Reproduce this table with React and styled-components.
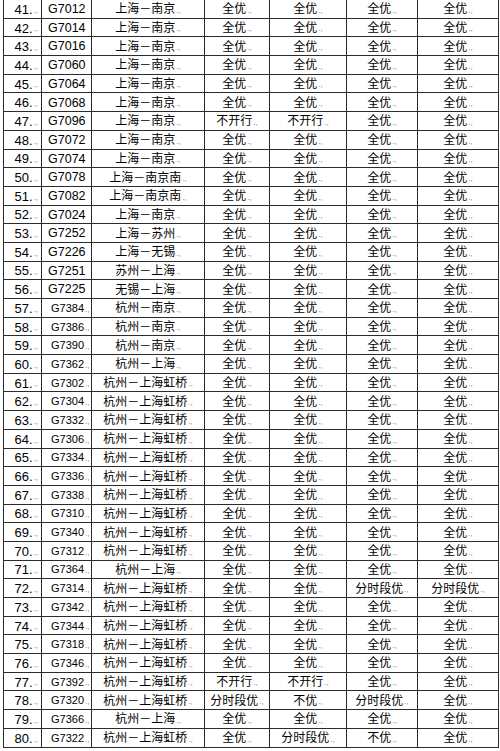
import React from 'react';
import styled, { createGlobalStyle } from 'styled-components';

const GlobalStyle = createGlobalStyle`
  html, body {
    margin: 0;
    padding: 0;
    background: #fff;
  }
  body {
    font-family: "Liberation Sans", "Noto Sans CJK SC", sans-serif;
    color: #000;
  }
`;

const Sheet = styled.div`
  width: 494px;
  margin-left: 3px;
  border-left: 1px solid #2b2b2b;
  border-right: 1px solid #2b2b2b;
`;

const Row = styled.div`
  display: grid;
  grid-template-columns: 37px 50px 113px 65px 77px 71px 1fr;
  height: 18.7px;
  box-sizing: border-box;
  border-bottom: 1px solid #2b2b2b;
`;

const Cell = styled.div`
  display: flex;
  align-items: center;
  justify-content: ${p => p.align || 'center'};
  padding: ${p => p.pad || '0'};
  padding-top: 1px;
  font-size: ${p => p.size || 12}px;
  white-space: nowrap;
  overflow: hidden;
  line-height: 1;
  & + & {
    border-left: 1px solid #2b2b2b;
  }
`;

const Mark = styled.span`
  font-size: 8px;
  color: #777;
  margin-left: 1px;
  align-self: flex-end;
  padding-bottom: 3px;
`;

const Text = ({ children, mark = true }) => (
  <>
    {children}
    {mark && <Mark>.,</Mark>}
  </>
);

const ALL = ['全优', '全优', '全优', '全优'];

const rows = [
  [41, 'G7012', '上海－南京'],
  [42, 'G7014', '上海－南京'],
  [43, 'G7016', '上海－南京'],
  [44, 'G7060', '上海－南京'],
  [45, 'G7064', '上海－南京'],
  [46, 'G7068', '上海－南京'],
  [47, 'G7096', '上海－南京', ['不开行', '不开行', '全优', '全优']],
  [48, 'G7072', '上海－南京'],
  [49, 'G7074', '上海－南京'],
  [50, 'G7078', '上海－南京南'],
  [51, 'G7082', '上海－南京南'],
  [52, 'G7024', '上海－南京'],
  [53, 'G7252', '上海－苏州'],
  [54, 'G7226', '上海－无锡'],
  [55, 'G7251', '苏州－上海'],
  [56, 'G7225', '无锡－上海'],
  [57, 'G7384', '杭州－南京'],
  [58, 'G7386', '杭州－南京'],
  [59, 'G7390', '杭州－南京'],
  [60, 'G7362', '杭州－上海'],
  [61, 'G7302', '杭州－上海虹桥'],
  [62, 'G7304', '杭州－上海虹桥'],
  [63, 'G7332', '杭州－上海虹桥'],
  [64, 'G7306', '杭州－上海虹桥'],
  [65, 'G7334', '杭州－上海虹桥'],
  [66, 'G7336', '杭州－上海虹桥'],
  [67, 'G7338', '杭州－上海虹桥'],
  [68, 'G7310', '杭州－上海虹桥'],
  [69, 'G7340', '杭州－上海虹桥'],
  [70, 'G7312', '杭州－上海虹桥'],
  [71, 'G7364', '杭州－上海'],
  [72, 'G7314', '杭州－上海虹桥', ['全优', '全优', '分时段优', '分时段优']],
  [73, 'G7342', '杭州－上海虹桥'],
  [74, 'G7344', '杭州－上海虹桥'],
  [75, 'G7318', '杭州－上海虹桥'],
  [76, 'G7346', '杭州－上海虹桥'],
  [77, 'G7392', '杭州－上海虹桥', ['不开行', '不开行', '全优', '全优']],
  [78, 'G7320', '杭州－上海虹桥', ['分时段优', '不优', '分时段优', '全优']],
  [79, 'G7366', '杭州－上海'],
  [80, 'G7322', '杭州－上海虹桥', ['全优', '分时段优', '不优', '全优']],
];

export default function App() {
  return (
    <>
      <GlobalStyle />
      <Sheet>
        {rows.map(([no, code, route, status = ALL]) => {
          const small = no >= 57;
          return (
            <Row key={no}>
              <Cell align="flex-end" pad="0 3px 0 0" size={13}>
                <Text>{no}.</Text>
              </Cell>
              <Cell align="flex-start" pad={small ? '0 0 0 9px' : '0 0 0 6px'} size={small ? 11 : 12.5}>
                <Text mark={small}>{code}</Text>
              </Cell>
              <Cell>
                <Text>{route}</Text>
              </Cell>
              {status.map((s, i) => (
                <Cell key={i}>
                  <Text>{s}</Text>
                </Cell>
              ))}
            </Row>
          );
        })}
      </Sheet>
    </>
  );
}
